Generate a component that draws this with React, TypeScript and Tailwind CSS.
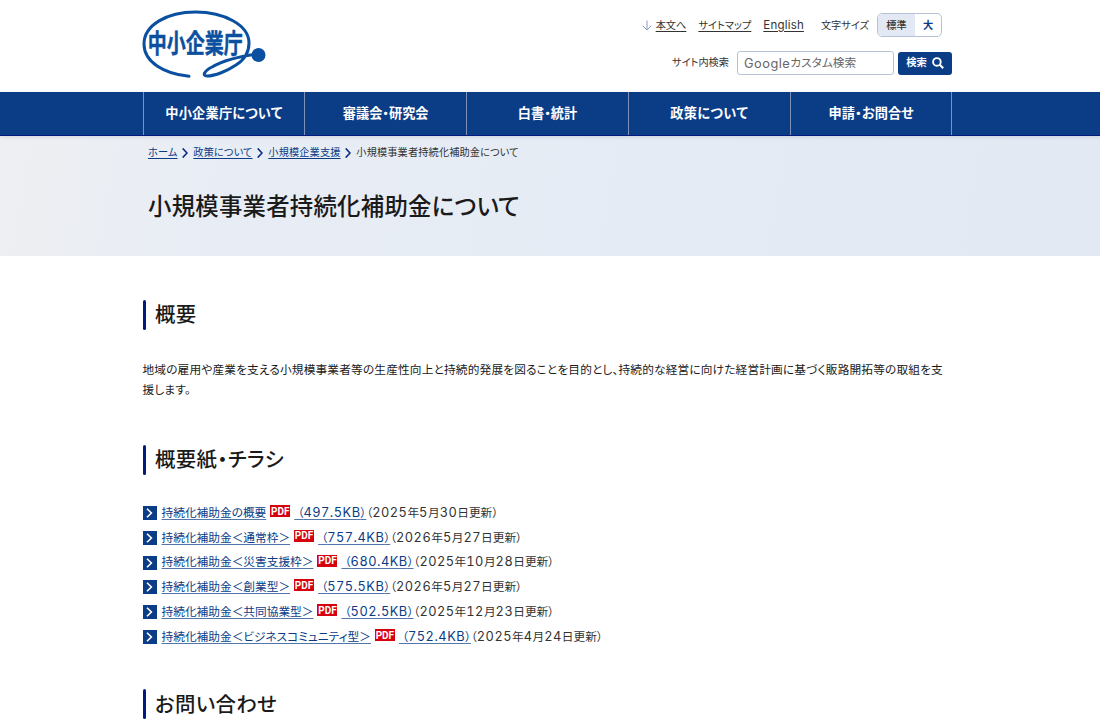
import React from 'react';

type NavItem = { label: string; className: string };

const navItems: NavItem[] = [
    { label: '中小企業庁について', className: 'tracking-[0.2px]' },
    { label: '審議会・研究会', className: '' },
    { label: '白書・統計', className: '' },
    { label: '政策について', className: 'tracking-[0.4px]' },
    { label: '申請・お問合せ', className: 'tracking-[0.1px]' },
];

type Leaflet = { title: string; size: string; date: string };

const leaflets: Leaflet[] = [
    { title: '持続化補助金の概要', size: '497.5KB', date: '2025年5月30日更新' },
    { title: '持続化補助金＜通常枠＞', size: '757.4KB', date: '2026年5月27日更新' },
    { title: '持続化補助金＜災害支援枠＞', size: '680.4KB', date: '2025年10月28日更新' },
    { title: '持続化補助金＜創業型＞', size: '575.5KB', date: '2026年5月27日更新' },
    { title: '持続化補助金＜共同協業型＞', size: '502.5KB', date: '2025年12月23日更新' },
    { title: '持続化補助金＜ビジネスコミュニティ型＞', size: '752.4KB', date: '2025年4月24日更新' },
];

function Logo() {
    return (
        <svg className="-ml-px mt-[10px] h-[70px] w-[126px]" viewBox="0 0 126 70" role="img" aria-label="中小企業庁">
            <path
                d="M47 66.3C22 64 2 52 2 34C2 15 25 2 53.5 2S107 15 107 33C107 42 102 50 94 55C85 61 73 66 65 66C60 66 62 61 70 57C82 50 100 46 116 44"
                fill="none"
                stroke="#0b50a0"
                strokeWidth="3"
                strokeLinecap="round"
                strokeLinejoin="round"
            />
            <circle cx="116.5" cy="45" r="7" fill="#0b50a0" />
            <text
                x="8"
                y="43"
                transform="scale(0.73 1)"
                fill="#0b50a0"
                stroke="#0b50a0"
                strokeWidth="0.5"
                strokeLinejoin="round"
                className="text-[26px] font-bold"
            >
                中小企業庁
            </text>
        </svg>
    );
}

function Separator() {
    return (
        <svg className="h-[10px] w-[6px] shrink-0" viewBox="0 0 6 10" fill="none">
            <path d="M0.7 0.4L5 5L0.7 9.6" stroke="#0a2c86" strokeWidth="1.6" />
        </svg>
    );
}

function Heading(props: { children: React.ReactNode; className?: string }) {
    return (
        <h2
            className={`flex h-[30px] items-center text-[20.4px] font-medium tracking-[0.4px] text-[#1a1a1a] ${props.className ?? ''}`}
        >
            <span className="mr-[9px] h-[30px] w-[3.5px] rounded-full bg-[#001a80]" />
            <span className="pt-[2px]">{props.children}</span>
        </h2>
    );
}

// Digits and latin letters are set wider than the kanji around them
function Wide(props: { text: string }) {
    return (
        <>
            {props.text.split(/([0-9A-Z.]+)/).map((part, i) =>
                i % 2 === 1 ? (
                    <span key={i} className="text-[12.8px] leading-none tracking-[0.5px] [font-feature-settings:'tnum']">
                        {part}
                    </span>
                ) : (
                    part
                ),
            )}
        </>
    );
}

function Header() {
    return (
        <header className="mx-auto flex h-[92px] w-[814px] justify-between pr-[4px]">
            <Logo />
            <div className="flex flex-col items-end">
                <div className="mr-[11px] mt-[13px] flex h-[24px] items-center text-[10.2px]">
                    <svg className="mr-[4px] mt-px h-[11px] w-[10px]" viewBox="0 0 10 11" fill="none" stroke="#8b9cc4">
                        <path d="M5 0.5V10M0.8 5.8L5 10L9.2 5.8" />
                    </svg>
                    <a className="mr-[12px] mt-px underline underline-offset-2">本文へ</a>
                    <a className="mr-[12px] mt-px underline underline-offset-2">サイトマップ</a>
                    <a className="mr-[17px] mt-px text-[11.5px] tracking-[0.2px] underline underline-offset-2">English</a>
                    <span className="mr-[8px] mt-px">文字サイズ</span>
                    <div className="flex h-[24px] w-[65px] overflow-hidden rounded-[5px] border border-[#b9c1d9] font-medium">
                        <span className="flex w-[37px] items-center justify-center bg-[#e3e9f4] pt-px">標準</span>
                        <span className="flex flex-1 items-center justify-center pt-px font-bold text-[#0a3c86]">大</span>
                    </div>
                </div>
                <div className="mr-px mt-[14px] flex h-[24px] items-center">
                    <span className="mr-[8px] text-[10.2px]">サイト内検索</span>
                    <div className="mr-[4px] flex h-[24px] w-[157px] items-center rounded-[3px] border border-[#b9c1d9] pl-[6px] pt-px text-[11.7px] text-[#666]">
                        <span className="text-[12.8px] tracking-[0.5px]">Google</span>カスタム検索
                    </div>
                    <button className="flex h-[23px] w-[54px] items-center justify-center gap-[5px] rounded-[3px] bg-[#0b3d86] text-[10.3px] font-bold text-white">
                        検索
                        <svg className="h-[12px] w-[12px]" viewBox="0 0 12 12" fill="none" stroke="white">
                            <circle cx="4.9" cy="4.9" r="3.8" strokeWidth="1.9" />
                            <path d="M7.8 7.8L11.2 11.2" strokeWidth="2.2" />
                        </svg>
                    </button>
                </div>
            </div>
        </header>
    );
}

function Nav() {
    return (
        <nav className="relative h-[43.5px] border-b border-[#001a80] bg-[#0b3d86] shadow-[0_1px_4px_rgba(60,60,100,0.15)]">
            <div className="mx-auto w-[815px] pr-[5px]">
                <ul className="flex h-[42.5px] border-l border-[#8090b8]">
                    {navItems.map((item) => (
                        <li
                            key={item.label}
                            className="flex flex-1 items-center justify-center border-r border-[#8090b8] pt-[2px] text-[13.2px] font-bold text-white"
                        >
                            <span className={item.className}>{item.label}</span>
                        </li>
                    ))}
                </ul>
            </div>
        </nav>
    );
}

function LeafletRow(props: { item: Leaflet }) {
    const { title, size, date } = props.item;

    return (
        <li className="flex h-[24.8px] items-center whitespace-nowrap">
            <span className="mr-[5px] flex h-[14px] w-[14px] items-center justify-center bg-[#0b3d86]">
                <svg className="h-[10px] w-[7px]" viewBox="0 0 7 10" fill="none">
                    <path d="M1 0.7L5.4 5L1 9.3" stroke="white" strokeWidth="1.6" />
                </svg>
            </span>
            <a className="pt-px text-[#0a3c86] underline decoration-[#0a3c86]/70 underline-offset-2">{title}</a>
            <span className="mx-[4px] mb-[4px] flex h-[12px] w-[20px] items-center justify-center bg-[#d7000f] font-['Roboto'] text-[10px] font-bold text-white">
                PDF
            </span>
            <a className="pt-px text-[#0a3c86] underline decoration-[#0a3c86]/70 underline-offset-2">
                &nbsp;（<Wide text={size} />）
            </a>
            <span className="pt-px">
                （<Wide text={date} />）
            </span>
        </li>
    );
}

export default function App() {
    return (
        <div className="h-[728px] overflow-hidden bg-white font-['Inter','Noto_Sans_CJK_JP',sans-serif] text-[11.7px] leading-normal text-[#333] [font-feature-settings:'palt']">
            <Header />
            <Nav />
            <div className="h-[120px] bg-linear-100 from-[#eeeff2] via-[#e8edf5] via-20% to-[#e2e9f3]">
                <div className="mx-auto w-[804px] pt-[9px]">
                    <div className="flex h-[16px] items-center gap-[4.9px] text-[10.2px] tracking-[0.13px] whitespace-nowrap">
                        <a className="text-[#0a3c86] underline underline-offset-2">ホーム</a>
                        <Separator />
                        <a className="text-[#0a3c86] underline underline-offset-2">政策について</a>
                        <Separator />
                        <a className="text-[#0a3c86] underline underline-offset-2">小規模企業支援</a>
                        <Separator />
                        <span>小規模事業者持続化補助金について</span>
                    </div>
                    <h1 className="mt-[27px] text-[23.4px] font-medium leading-[38px] tracking-[0.25px] text-[#1a1a1a]">
                        小規模事業者持続化補助金について
                    </h1>
                </div>
            </div>
            <main className="mx-auto w-[815px]">
                <Heading className="mt-[44px]">概要</Heading>
                <p className="mt-[30px] leading-[20.6px] tracking-[0.16px] text-[#1a1a1a]">
                    <span className="whitespace-nowrap">
                        地域の雇用や産業を支える小規模事業者等の生産性向上と持続的発展を図ることを目的とし、持続的な経営に向けた経営計画に基づく販路開拓等の取組を支
                    </span>
                    <br />
                    援します。
                </p>
                <Heading className="mt-[44px]">概要紙・チラシ</Heading>
                <ul className="mt-[26px]">
                    {leaflets.map((item) => (
                        <LeafletRow key={item.title} item={item} />
                    ))}
                </ul>
                <Heading className="mt-[40px]">お問い合わせ</Heading>
            </main>
        </div>
    );
}
